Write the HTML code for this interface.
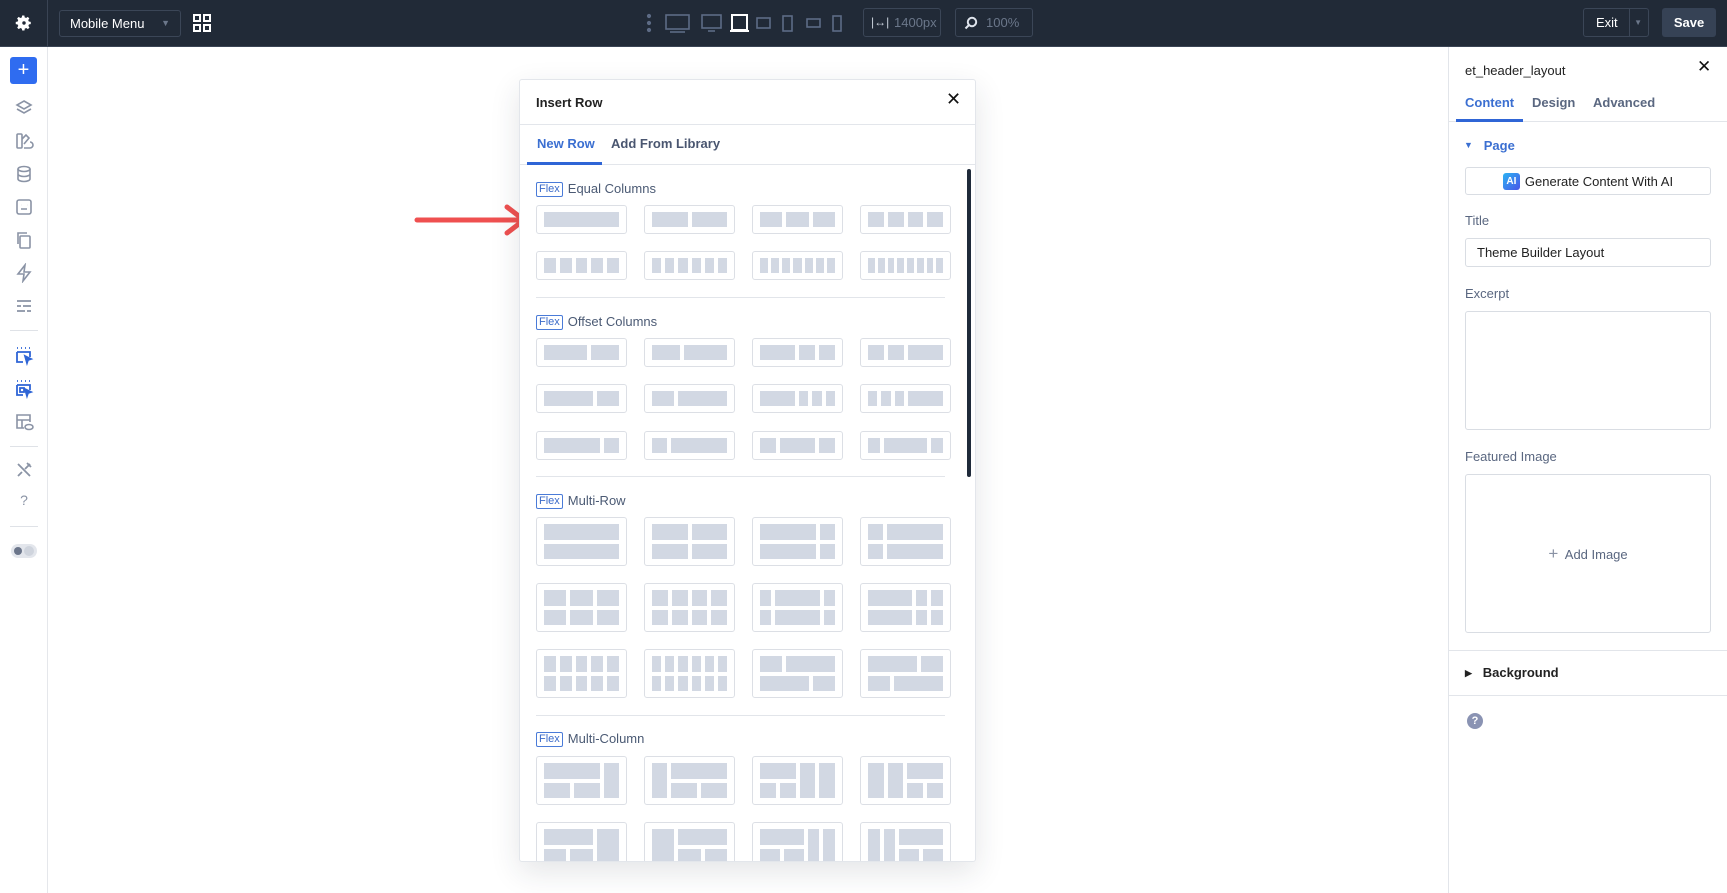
<!DOCTYPE html>
<html><head><meta charset="utf-8"><style>
*{box-sizing:border-box;margin:0;padding:0}
body{width:1727px;height:893px;position:relative;overflow:hidden;background:#fff;font-family:"Liberation Sans",sans-serif;color:#222}
.a{position:absolute}
#top{left:0;top:0;width:1727px;height:47px;background:#212a37;border-bottom:1px solid #3a4454}
#side{left:0;top:47px;width:48px;height:846px;border-right:1px solid #e5e7eb;background:#fff}
.ic{position:absolute;left:14px;width:20px;height:20px}
.sep{position:absolute;left:10px;width:28px;height:1px;background:#dfe2e7}
#modal{left:519px;top:79px;width:457px;height:783px;background:#fff;border:1px solid #e3e6eb;border-radius:3px;box-shadow:0 10px 30px rgba(30,40,60,.12)}
.t{position:absolute;width:91px;height:29px;border:1px solid #dcdfe5;border-radius:3px;padding:6px 7px;display:flex;gap:4px;background:#fff}
.t.h{height:49px;flex-direction:column}
.t i{display:block;background:#d2d8e3;flex:1}
.r{display:flex;gap:4px;flex:1}
.c{display:flex;flex-direction:column;gap:4px}
.lbl{position:absolute;font-size:13px;color:#4b5a74;display:flex;align-items:center;gap:5px;line-height:16px}
.fx{border:1px solid #4a7bd8;color:#3b6bc9;border-radius:2px;font-size:11px;padding:0 2px;line-height:13px;display:inline-block}
.hs{position:absolute;left:536px;width:409px;height:1px;background:#e2e5ea}
.pl{position:absolute;left:1465px;font-size:13px;color:#5a6780}
.box{position:absolute;left:1465px;width:246px;border:1px solid #d9dde3;border-radius:3px;background:#fff}
</style></head><body>
<div id="top" class="a">
  <svg class="a" style="left:15px;top:14px" width="18" height="18" viewBox="0 0 24 24"><path fill="#fff" d="M12 8.5a3.5 3.5 0 1 0 0 7 3.5 3.5 0 0 0 0-7zm9 5v-3l-2.6-.5a7 7 0 0 0-.8-1.9l1.5-2.2-2.1-2.1-2.2 1.5a7 7 0 0 0-1.9-.8L12.5 2h-3l-.5 2.6a7 7 0 0 0-1.9.8L4.9 3.9 2.8 6l1.5 2.2a7 7 0 0 0-.8 1.9L1 10.5v3l2.6.5c.2.7.4 1.3.8 1.9l-1.5 2.2 2.1 2.1 2.2-1.5c.6.4 1.200.6 1.900.8l.5 2.5h3l.5-2.6a7 7 0 0 0 1.9-.8l2.2 1.5 2.1-2.1-1.5-2.2c.4-.6.6-1.2.8-1.9z"/><circle cx="12" cy="12" r="2.3" fill="#212a37"/></svg>
  <div class="a" style="left:47px;top:0;width:1px;height:47px;background:#3a4454"></div>
  <div class="a" style="left:59px;top:10px;width:122px;height:27px;border:1px solid #3b4657;border-radius:3px;color:#fff;font-size:13px;line-height:25px;padding-left:10px">Mobile Menu<span style="position:absolute;right:10px;top:0;color:#6b778a;font-size:9px">▼</span></div>
  <svg class="a" style="left:193px;top:14px" width="18" height="18" viewBox="0 0 18 18" fill="none" stroke="#fff" stroke-width="2"><rect x="1" y="1" width="6" height="6"/><rect x="11" y="1" width="6" height="6"/><rect x="1" y="11" width="6" height="6"/><rect x="11" y="11" width="6" height="6"/></svg>
  <svg class="a" style="left:645px;top:12px" width="200" height="24" viewBox="0 0 200 24" fill="none" stroke="#5d6b85" stroke-width="1.6">
    <circle cx="4" cy="4" r="1.3" fill="#5d6b85"/><circle cx="4" cy="11" r="1.3" fill="#5d6b85"/><circle cx="4" cy="18" r="1.3" fill="#5d6b85"/>
    <rect x="21" y="3" width="23" height="14"/><path d="M25 20h15"/>
    <rect x="57" y="3" width="19" height="13"/><path d="M63 19h7"/>
    <rect x="87" y="3" width="15" height="15" stroke="#fff" stroke-width="2"/><path d="M85 19h19" stroke="#fff" stroke-width="2"/>
    <rect x="112" y="6" width="13" height="10"/>
    <rect x="138" y="4" width="9" height="15"/>
    <rect x="162" y="7" width="13" height="8"/>
    <rect x="188" y="4" width="8" height="15"/>
  </svg>
  <div class="a" style="left:863px;top:8px;width:78px;height:29px;border:1px solid #3b4657;border-radius:3px;color:#6b778a;font-size:13px;line-height:27px;padding-left:30px">1400px<span style="position:absolute;left:7px;top:0;color:#c9d0db;font-size:12px">|↔|</span></div>
  <div class="a" style="left:955px;top:8px;width:78px;height:29px;border:1px solid #3b4657;border-radius:3px;color:#6b778a;font-size:13px;line-height:27px;padding-left:30px">100%<svg class="a" style="left:8px;top:7px" width="14" height="14" viewBox="0 0 14 14" fill="none" stroke="#dfe4ec" stroke-width="2"><circle cx="8" cy="6" r="4.2"/><path d="M5 9l-3.5 3.5"/></svg></div>
  <div class="a" style="left:1583px;top:8px;width:66px;height:29px;border:1px solid #3b4657;border-radius:3px;color:#fff;font-size:13px;line-height:27px;padding-left:12px">Exit<span style="position:absolute;left:45px;top:0;width:1px;height:27px;background:#3b4657"></span><span style="position:absolute;right:6px;top:0;color:#6b778a;font-size:8px">▼</span></div>
  <div class="a" style="left:1662px;top:8px;width:54px;height:29px;background:#364255;border-radius:3px;color:#fff;font-size:13px;line-height:29px;text-align:center;font-weight:600">Save</div>
</div>

<div id="side" class="a">
  <div class="a" style="left:10px;top:10px;width:27px;height:27px;background:#2f6cf0;border-radius:3px;color:#fff;font-size:20px;line-height:26px;text-align:center">+</div>
  <svg class="ic" style="top:51px" viewBox="0 0 20 20" fill="none" stroke="#8a93a5" stroke-width="1.6"><path d="M10 3l7 4-7 4-7-4z"/><path d="M3 11l7 4 7-4"/></svg>
  <svg class="ic" style="top:84px" viewBox="0 0 20 20" fill="none" stroke="#8a93a5" stroke-width="1.6"><rect x="3" y="3" width="5" height="14" rx="1"/><path d="M8 8l4-4 3 3-5 6M10 17h6a1.5 1.5 0 0 0 0-6"/></svg>
  <svg class="ic" style="top:117px" viewBox="0 0 20 20" fill="none" stroke="#8a93a5" stroke-width="1.6"><ellipse cx="10" cy="5" rx="6" ry="2.5"/><path d="M4 5v10c0 1.4 2.7 2.5 6 2.5s6-1.1 6-2.5V5M4 10c0 1.4 2.7 2.5 6 2.5s6-1.1 6-2.5"/></svg>
  <svg class="ic" style="top:150px" viewBox="0 0 20 20" fill="none" stroke="#8a93a5" stroke-width="1.6"><rect x="3" y="3" width="14" height="14" rx="2"/><path d="M7 8h.1M13 8h.1M7 12h6"/></svg>
  <svg class="ic" style="top:183px" viewBox="0 0 20 20" fill="none" stroke="#8a93a5" stroke-width="1.6"><rect x="6" y="6" width="10" height="12" rx="1"/><path d="M4 14V3h9"/></svg>
  <svg class="ic" style="top:216px" viewBox="0 0 20 20" fill="none" stroke="#8a93a5" stroke-width="1.6"><path d="M11 2L4 11h6l-1 7 7-9h-6z"/></svg>
  <svg class="ic" style="top:249px" viewBox="0 0 20 20" fill="none" stroke="#8a93a5" stroke-width="1.8"><path d="M3 5h14M3 10h4M9 10h8M3 15h8M13 15h4"/></svg>
  <div class="sep" style="top:283px"></div>
  <svg class="ic" style="top:299px" viewBox="0 0 20 20" fill="none" stroke="#2f65d6" stroke-width="1.8"><path d="M3 2h1M7 2h1M11 2h1M15 2h1"/><path d="M3 6v10h6M3 6h13v5"/><path d="M11 10l6 3-3 1-1 3z" fill="#2f65d6"/></svg>
  <svg class="ic" style="top:332px" viewBox="0 0 20 20" fill="none" stroke="#2f65d6" stroke-width="1.8"><path d="M3 2h1M7 2h1M11 2h1M15 2h1"/><path d="M3 6v10h6M3 6h13v5"/><rect x="6" y="9" width="4" height="4"/><path d="M11 10l6 3-3 1-1 3z" fill="#2f65d6"/></svg>
  <svg class="ic" style="top:365px" viewBox="0 0 20 20" fill="none" stroke="#8a93a5" stroke-width="1.6"><path d="M10 16H3V3h13v7M3 8h13M8 8v8"/><ellipse cx="15" cy="15" rx="4" ry="2.5"/></svg>
  <div class="sep" style="top:399px"></div>
  <svg class="ic" style="top:413px" viewBox="0 0 20 20" fill="none" stroke="#8a93a5" stroke-width="1.8"><path d="M4 4l12 12M16 4l-5 5M4 16l4-4M13 3l4 4"/></svg>
  <div class="a" style="left:14px;top:445px;width:20px;text-align:center;color:#8a93a5;font-size:14px">?</div>
  <div class="sep" style="top:479px"></div>
  <div class="a" style="left:11px;top:497px;width:26px;height:14px;border-radius:7px;background:#e3e6ec"><span class="a" style="left:3px;top:3px;width:8px;height:8px;border-radius:50%;background:#6b758a"></span><span class="a" style="left:13px;top:2px;width:10px;height:10px;border-radius:50%;background:#cfd4dd"></span></div>
</div>

<svg class="a" style="left:410px;top:200px" width="125" height="40" viewBox="0 0 125 40" fill="none" stroke="#ef5050" stroke-width="5" stroke-linecap="round" stroke-linejoin="round"><path d="M7 20h108M97 7l17 13-17 13"/></svg>

<div id="modal" class="a"></div>
<div class="a" style="left:0;top:0;width:1727px;height:861px;overflow:hidden">
<div class="a" style="left:536px;top:95px;font-size:13px;font-weight:600;color:#222">Insert Row</div>
<div class="a" style="left:946px;top:89px;font-size:18px;color:#111">✕</div>
<div class="a" style="left:520px;top:124px;width:455px;height:1px;background:#e3e6eb"></div>
<div class="a" style="left:537px;top:136px;font-size:13px;font-weight:600;color:#3b6fd1">New Row</div>
<div class="a" style="left:611px;top:136px;font-size:13px;font-weight:600;color:#4a5670">Add From Library</div>
<div class="a" style="left:520px;top:164px;width:455px;height:1px;background:#e3e6eb"></div>
<div class="a" style="left:527px;top:162px;width:75px;height:3px;background:#2f65d6"></div>
<div class="a" style="left:967px;top:169px;width:4px;height:308px;background:#1f2a3a;border-radius:2px"></div>

<div class="lbl" style="left:536px;top:181px"><span class="fx">Flex</span>Equal Columns</div>
<div class="t" style="left:536px;top:205px"><i></i></div>
<div class="t" style="left:644px;top:205px"><i></i><i></i></div>
<div class="t" style="left:752px;top:205px"><i></i><i></i><i></i></div>
<div class="t" style="left:860px;top:205px"><i></i><i></i><i></i><i></i></div>
<div class="t" style="left:536px;top:251px"><i></i><i></i><i></i><i></i><i></i></div>
<div class="t" style="left:644px;top:251px"><i></i><i></i><i></i><i></i><i></i><i></i></div>
<div class="t" style="left:752px;top:251px;gap:3px"><i></i><i></i><i></i><i></i><i></i><i></i><i></i></div>
<div class="t" style="left:860px;top:251px;gap:3px"><i></i><i></i><i></i><i></i><i></i><i></i><i></i><i></i></div>
<div class="hs" style="top:297px"></div>

<div class="lbl" style="left:536px;top:314px"><span class="fx">Flex</span>Offset Columns</div>
<div class="t" style="left:536px;top:338px"><i style="flex:3"></i><i style="flex:2"></i></div>
<div class="t" style="left:644px;top:338px"><i style="flex:2"></i><i style="flex:3"></i></div>
<div class="t" style="left:752px;top:338px"><i style="flex:2.2"></i><i></i><i></i></div>
<div class="t" style="left:860px;top:338px"><i></i><i></i><i style="flex:2.2"></i></div>
<div class="t" style="left:536px;top:384px"><i style="flex:2.2"></i><i></i></div>
<div class="t" style="left:644px;top:384px"><i></i><i style="flex:2.2"></i></div>
<div class="t" style="left:752px;top:384px"><i style="flex:3.7"></i><i></i><i></i><i></i></div>
<div class="t" style="left:860px;top:384px"><i></i><i></i><i></i><i style="flex:3.7"></i></div>
<div class="t" style="left:536px;top:431px"><i style="flex:3.6"></i><i></i></div>
<div class="t" style="left:644px;top:431px"><i></i><i style="flex:3.6"></i></div>
<div class="t" style="left:752px;top:431px"><i></i><i style="flex:2.2"></i><i></i></div>
<div class="t" style="left:860px;top:431px"><i></i><i style="flex:3.8"></i><i></i></div>
<div class="hs" style="top:476px"></div>

<div class="lbl" style="left:536px;top:493px"><span class="fx">Flex</span>Multi-Row</div>
<div class="t h" style="left:536px;top:517px"><div class="r"><i></i></div><div class="r"><i></i></div></div>
<div class="t h" style="left:644px;top:517px"><div class="r"><i></i><i></i></div><div class="r"><i></i><i></i></div></div>
<div class="t h" style="left:752px;top:517px"><div class="r"><i style="flex:3.7"></i><i></i></div><div class="r"><i style="flex:3.7"></i><i></i></div></div>
<div class="t h" style="left:860px;top:517px"><div class="r"><i></i><i style="flex:3.7"></i></div><div class="r"><i></i><i style="flex:3.7"></i></div></div>
<div class="t h" style="left:536px;top:583px"><div class="r"><i></i><i></i><i></i></div><div class="r"><i></i><i></i><i></i></div></div>
<div class="t h" style="left:644px;top:583px"><div class="r"><i></i><i></i><i></i><i></i></div><div class="r"><i></i><i></i><i></i><i></i></div></div>
<div class="t h" style="left:752px;top:583px"><div class="r"><i></i><i style="flex:3.9"></i><i></i></div><div class="r"><i></i><i style="flex:3.9"></i><i></i></div></div>
<div class="t h" style="left:860px;top:583px"><div class="r"><i style="flex:3.8"></i><i></i><i></i></div><div class="r"><i style="flex:3.8"></i><i></i><i></i></div></div>
<div class="t h" style="left:536px;top:649px"><div class="r"><i></i><i></i><i></i><i></i><i></i></div><div class="r"><i></i><i></i><i></i><i></i><i></i></div></div>
<div class="t h" style="left:644px;top:649px"><div class="r"><i></i><i></i><i></i><i></i><i></i><i></i></div><div class="r"><i></i><i></i><i></i><i></i><i></i><i></i></div></div>
<div class="t h" style="left:752px;top:649px"><div class="r"><i></i><i style="flex:2.2"></i></div><div class="r"><i style="flex:2.2"></i><i></i></div></div>
<div class="t h" style="left:860px;top:649px"><div class="r"><i style="flex:2.2"></i><i></i></div><div class="r"><i></i><i style="flex:2.2"></i></div></div>
<div class="hs" style="top:715px"></div>

<div class="lbl" style="left:536px;top:731px"><span class="fx">Flex</span>Multi-Column</div>
<div class="t h" style="left:536px;top:756px;flex-direction:row"><div class="c" style="flex:3.6"><i></i><div class="r"><i></i><i></i></div></div><i></i></div>
<div class="t h" style="left:644px;top:756px;flex-direction:row"><i></i><div class="c" style="flex:3.6"><i></i><div class="r"><i></i><i></i></div></div></div>
<div class="t h" style="left:752px;top:756px;flex-direction:row"><div class="c" style="flex:2.3"><i></i><div class="r"><i></i><i></i></div></div><i></i><i></i></div>
<div class="t h" style="left:860px;top:756px;flex-direction:row"><i></i><i></i><div class="c" style="flex:2.3"><i></i><div class="r"><i></i><i></i></div></div></div>
<div class="t h" style="left:536px;top:822px;flex-direction:row"><div class="c" style="flex:2.2"><i></i><div class="r"><i></i><i></i></div></div><i></i></div>
<div class="t h" style="left:644px;top:822px;flex-direction:row"><i></i><div class="c" style="flex:2.2"><i></i><div class="r"><i></i><i></i></div></div></div>
<div class="t h" style="left:752px;top:822px;flex-direction:row"><div class="c" style="flex:3.8"><i></i><div class="r"><i></i><i></i></div></div><i></i><i></i></div>
<div class="t h" style="left:860px;top:822px;flex-direction:row"><i></i><i></i><div class="c" style="flex:3.8"><i></i><div class="r"><i></i><i></i></div></div></div>
</div>

<div class="a" style="left:1448px;top:47px;width:1px;height:846px;background:#e2e5ea"></div>
<div class="a" style="left:1465px;top:63px;font-size:13px;color:#222">et_header_layout</div>
<div class="a" style="left:1697px;top:57px;font-size:17px;color:#111">✕</div>
<div class="a" style="left:1465px;top:95px;font-size:13px;font-weight:600;color:#3b6fd1">Content</div>
<div class="a" style="left:1532px;top:95px;font-size:13px;font-weight:600;color:#5a6780">Design</div>
<div class="a" style="left:1593px;top:95px;font-size:13px;font-weight:600;color:#5a6780">Advanced</div>
<div class="a" style="left:1449px;top:121px;width:278px;height:1px;background:#e2e5ea"></div>
<div class="a" style="left:1456px;top:119px;width:67px;height:3px;background:#2f65d6"></div>
<div class="a" style="left:1464px;top:138px;font-size:13px;font-weight:600;color:#3b6fd1"><span style="font-size:9px;position:relative;top:-2px">▼</span>&nbsp;&nbsp;&nbsp;Page</div>
<div class="box" style="top:167px;height:28px;display:flex;align-items:center;justify-content:center;font-size:13px;color:#222"><span style="display:inline-block;width:17px;height:17px;border-radius:3px;background:linear-gradient(135deg,#2bb3f3,#4a55e8);color:#fff;font-size:10px;font-weight:700;line-height:17px;text-align:center;margin-right:5px">AI</span>Generate Content With AI</div>
<div class="pl" style="top:213px">Title</div>
<div class="box" style="top:238px;height:29px;font-size:13px;line-height:27px;padding-left:11px;color:#222">Theme Builder Layout</div>
<div class="pl" style="top:286px">Excerpt</div>
<div class="box" style="top:311px;height:119px"></div>
<div class="pl" style="top:449px">Featured Image</div>
<div class="box" style="top:474px;height:159px;text-align:center;line-height:157px;font-size:13px;color:#5a6780"><span style="font-size:17px;color:#8a93a5">+</span>&nbsp; Add Image</div>
<div class="a" style="left:1449px;top:650px;width:278px;height:1px;background:#e2e5ea"></div>
<div class="a" style="left:1465px;top:665px;font-size:13px;font-weight:600;color:#222"><span style="font-size:9px;position:relative;top:-1px">▶</span>&nbsp;&nbsp;&nbsp;Background</div>
<div class="a" style="left:1449px;top:695px;width:278px;height:1px;background:#e2e5ea"></div>
<div class="a" style="left:1467px;top:713px;width:16px;height:16px;border-radius:50%;background:#8a93b3;color:#fff;font-size:11px;font-weight:700;text-align:center;line-height:16px">?</div>
</body></html>
